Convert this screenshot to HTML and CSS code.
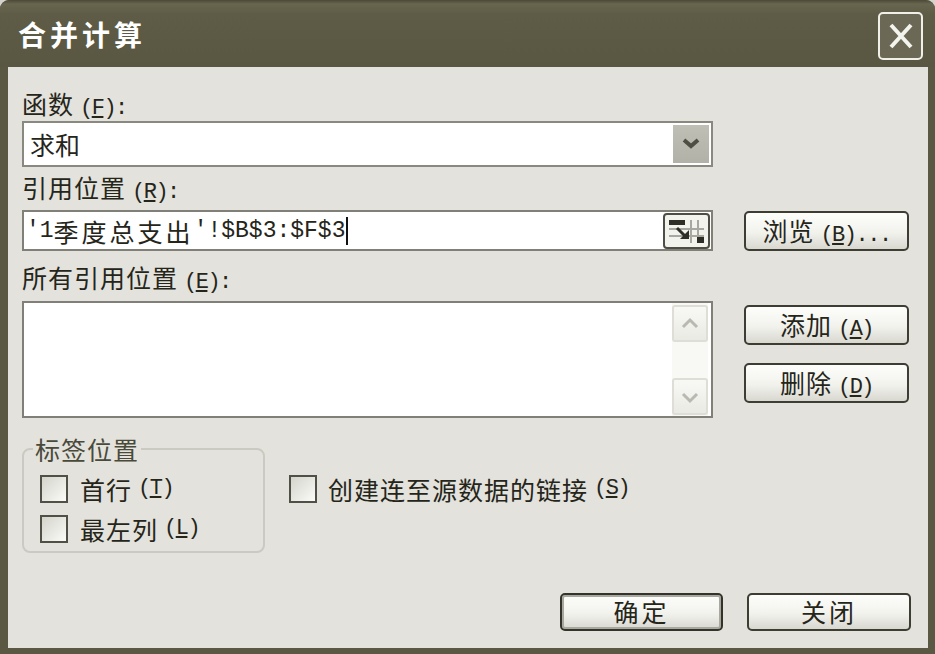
FILE: index.html
```html
<!DOCTYPE html>
<html lang="zh-CN">
<head>
<meta charset="utf-8">
<title>合并计算</title>
<link rel="stylesheet" href="styles.css">
</head>
<body>
<div class="window">
  <div class="titlebar">
    <span class="title">合并计算</span>
    <div class="close">
      <svg width="26" height="28" viewBox="0 0 26 28"><path d="M3 3 L23 25 M23 3 L3 25" stroke="#f4f4ee" stroke-width="4" fill="none"/></svg>
    </div>
  </div>
  <div class="body">
    <div class="label l1">函数<span class="k">(<u>F</u>):</span></div>
    <div class="combo">
      <span class="combo-val">求和</span>
      <span class="drop">
        <svg width="36" height="38" viewBox="0 0 36 38"><polyline points="11,15 18,21 25,15" stroke="#4e4e44" stroke-width="4" fill="none"/></svg>
      </span>
    </div>
    <div class="label l2">引用位置<span class="k">(<u>R</u>):</span></div>
    <div class="ref-row">
      <div class="input">
        <span class="a">'1</span><span class="c">季度总支出</span><span class="a">'!$B$3:$F$3</span><span class="caret"></span>
        <span class="collapse">
          <svg width="41" height="30" viewBox="0 0 41 30">
            <rect x="0" y="0" width="41" height="30" fill="#f3f3ee"/>
            <path d="M3 13 H38 M3 20 H38 M25 4 V27 M32 4 V27" stroke="#a8a8a0" stroke-width="2" fill="none"/>
            <rect x="3" y="4" width="16" height="5" fill="#2e2e26"/>
            <path d="M11 12 L19 20" stroke="#2e2e26" stroke-width="3"/>
            <polygon points="14,23 23,23 23,14" fill="#2e2e26"/>
            <rect x="31" y="21" width="7" height="6" fill="#2e2e26"/>
          </svg>
        </span>
      </div>
      <div class="btn browse">浏览<span class="k">(<u>B</u>)...</span></div>
    </div>
    <div class="label l3">所有引用位置<span class="k">(<u>E</u>):</span></div>
    <div class="list-row">
      <div class="listbox">
        <div class="scroll">
          <span class="sbtn">
            <svg width="32" height="34" viewBox="0 0 32 34"><polyline points="9,20 16,13 23,20" stroke="#b9b9b1" stroke-width="3" fill="none"/></svg>
          </span>
          <span class="sbtn">
            <svg width="32" height="33" viewBox="0 0 32 33"><polyline points="9,14 16,21 23,14" stroke="#b9b9b1" stroke-width="3" fill="none"/></svg>
          </span>
        </div>
      </div>
      <div class="side">
        <div class="btn add">添加<span class="k">(<u>A</u>)</span></div>
        <div class="btn del">删除<span class="k">(<u>D</u>)</span></div>
      </div>
    </div>
    <div class="options">
      <fieldset class="group">
        <legend>标签位置</legend>
        <div class="check"><span class="box"></span>首行<span class="k">(<u>T</u>)</span></div>
        <div class="check second"><span class="box"></span>最左列<span class="k">(<u>L</u>)</span></div>
      </fieldset>
      <div class="check link"><span class="box"></span>创建连至源数据的链接<span class="k">(<u>S</u>)</span></div>
    </div>
    <div class="footer">
      <div class="btn ok">确定</div>
      <div class="btn cancel">关闭</div>
    </div>
  </div>
</div>
</body>
</html>
```
FILE: styles.css
```css
html, body {
  margin: 0;
  padding: 0;
  background: #d4d4cc;
}
body {
  width: 935px;
  height: 654px;
  overflow: hidden;
  font-family: "Noto Sans CJK SC", sans-serif;
  color: #25251a;
}
.window {
  width: 935px;
  height: 654px;
  background: #5a5842;
  border-radius: 9px 9px 0 0;
  display: flex;
  flex-direction: column;
}
.titlebar {
  height: 67px;
  flex: none;
  box-sizing: border-box;
  display: flex;
  align-items: center;
  justify-content: space-between;
  padding: 0 12px 0 18px;
  border-radius: 9px 9px 0 0;
  background: linear-gradient(#4c4a37 0, #68664f 4px, #5e5c46 14px, #595741 100%);
}
.title {
  color: #fff;
  font-size: 28px;
  font-weight: 700;
  letter-spacing: 4px;
  line-height: 30px;
}
.close {
  width: 45px;
  height: 48px;
  box-sizing: border-box;
  margin-top: 5px;
  border: 2px solid #f0f0e8;
  border-radius: 5px;
  background: #6b6955;
  display: flex;
  align-items: center;
  justify-content: center;
}
.close svg { display: block; }
.body {
  flex: 1;
  margin: 0 7px 6px 8px;
  padding: 0 17px 0 14px;
  background: #e3e2dc;
  display: flex;
  flex-direction: column;
}
.label {
  height: 30px;
  line-height: 30px;
  font-size: 25px;
  letter-spacing: 1px;
  white-space: nowrap;
}
.k {
  font-family: "Liberation Mono", monospace;
  font-size: 22px;
  letter-spacing: -1.5px;
  margin-left: 6px;
}
.l1 { margin-top: 21px; }
.l2 { margin-top: 5px; }
.l3 { margin-top: 11px; }
.combo {
  margin-top: 3px;
  width: 691px;
  height: 46px;
  box-sizing: border-box;
  border: 2px solid #8a8980;
  background: #fff;
  display: flex;
  align-items: center;
  padding-left: 6px;
}
.combo-val {
  font-size: 25px;
  line-height: 30px;
}
.drop {
  margin-left: auto;
  margin-right: 2px;
  width: 36px;
  height: 38px;
  background: linear-gradient(#c0bfb5, #b2b1a7);
}
.drop svg { display: block; }
.ref-row {
  margin-top: 8px;
  display: flex;
  align-items: flex-start;
}
.input {
  width: 691px;
  height: 41px;
  box-sizing: border-box;
  border: 2px solid #808078;
  background: #fff;
  display: flex;
  align-items: center;
  padding-left: 2px;
  white-space: nowrap;
}
.a {
  font-family: "Liberation Mono", monospace;
  font-size: 23px;
  line-height: 30px;
}
.c {
  font-size: 25px;
  letter-spacing: 3px;
  line-height: 30px;
}
.caret {
  width: 2px;
  height: 28px;
  background: #111;
  margin-left: 1px;
}
.collapse {
  margin-left: auto;
  margin-right: 1px;
  width: 47px;
  height: 36px;
  box-sizing: border-box;
  border: 2px solid #4e4e44;
  border-radius: 4px;
  background: #f3f3ee;
  display: flex;
  align-items: center;
  justify-content: center;
}
.collapse svg { display: block; }
.btn {
  box-sizing: border-box;
  height: 40px;
  border: 2px solid #3e3d34;
  border-radius: 5px;
  background: linear-gradient(#fdfdfb, #f2f2ed 55%, #d8d7d0);
  font-size: 25px;
  line-height: 34px;
  text-align: center;
  white-space: nowrap;
  letter-spacing: 1px;
}
.browse {
  width: 165px;
  margin-left: 31px;
  margin-top: 1px;
}
.list-row {
  margin-top: 9px;
  display: flex;
  align-items: flex-start;
}
.listbox {
  width: 691px;
  height: 117px;
  box-sizing: border-box;
  border: 2px solid #808078;
  background: #fff;
  display: flex;
  justify-content: flex-end;
}
.scroll {
  width: 36px;
  margin-right: 3px;
  padding: 2px 0 1px;
  display: flex;
  flex-direction: column;
  justify-content: space-between;
  background: #f8f8f5;
}
.sbtn {
  box-sizing: border-box;
  height: 37px;
  border: 2px solid #deded6;
  border-radius: 3px;
  background: linear-gradient(#f8f8f5, #eaeae4);
}
.sbtn svg { display: block; }
.side {
  width: 165px;
  margin-left: 31px;
  display: flex;
  flex-direction: column;
}
.add { margin-top: 4px; }
.del { margin-top: 18px; }
.options {
  margin-top: 16px;
  display: flex;
  align-items: flex-start;
}
.group {
  margin: 0;
  width: 243px;
  min-width: 0;
  box-sizing: border-box;
  border: 2px solid #cbcac2;
  border-radius: 8px;
  padding: 10px 0 7px 0;
}
.group legend {
  margin-left: 9px;
  padding: 0 2px;
  height: 30px;
  line-height: 30px;
  font-size: 25px;
  letter-spacing: 1px;
  color: #4a4a3a;
}
.check {
  height: 30px;
  line-height: 30px;
  font-size: 25px;
  letter-spacing: 1px;
  display: flex;
  align-items: center;
  white-space: nowrap;
}
.group .check { margin-left: 16px; }
.group .second { margin-top: 10px; }
.box {
  width: 28px;
  height: 28px;
  box-sizing: border-box;
  border: 2px solid #505046;
  background: linear-gradient(135deg, #d4d4cc, #fbfbf8);
  margin-right: 12px;
  flex: none;
}
.link {
  margin-left: 24px;
  margin-top: 40px;
}
.link .box { margin-right: 11px; }
.footer {
  margin-top: 40px;
  display: flex;
  justify-content: flex-end;
  gap: 24px;
}
.ok {
  width: 163px;
  height: 38px;
  line-height: 32px;
  border-color: #34332b;
  box-shadow: inset 0 0 0 2px #a9a89e;
  letter-spacing: 3px;
}
.cancel {
  width: 164px;
  height: 38px;
  line-height: 32px;
  letter-spacing: 3px;
}
```
